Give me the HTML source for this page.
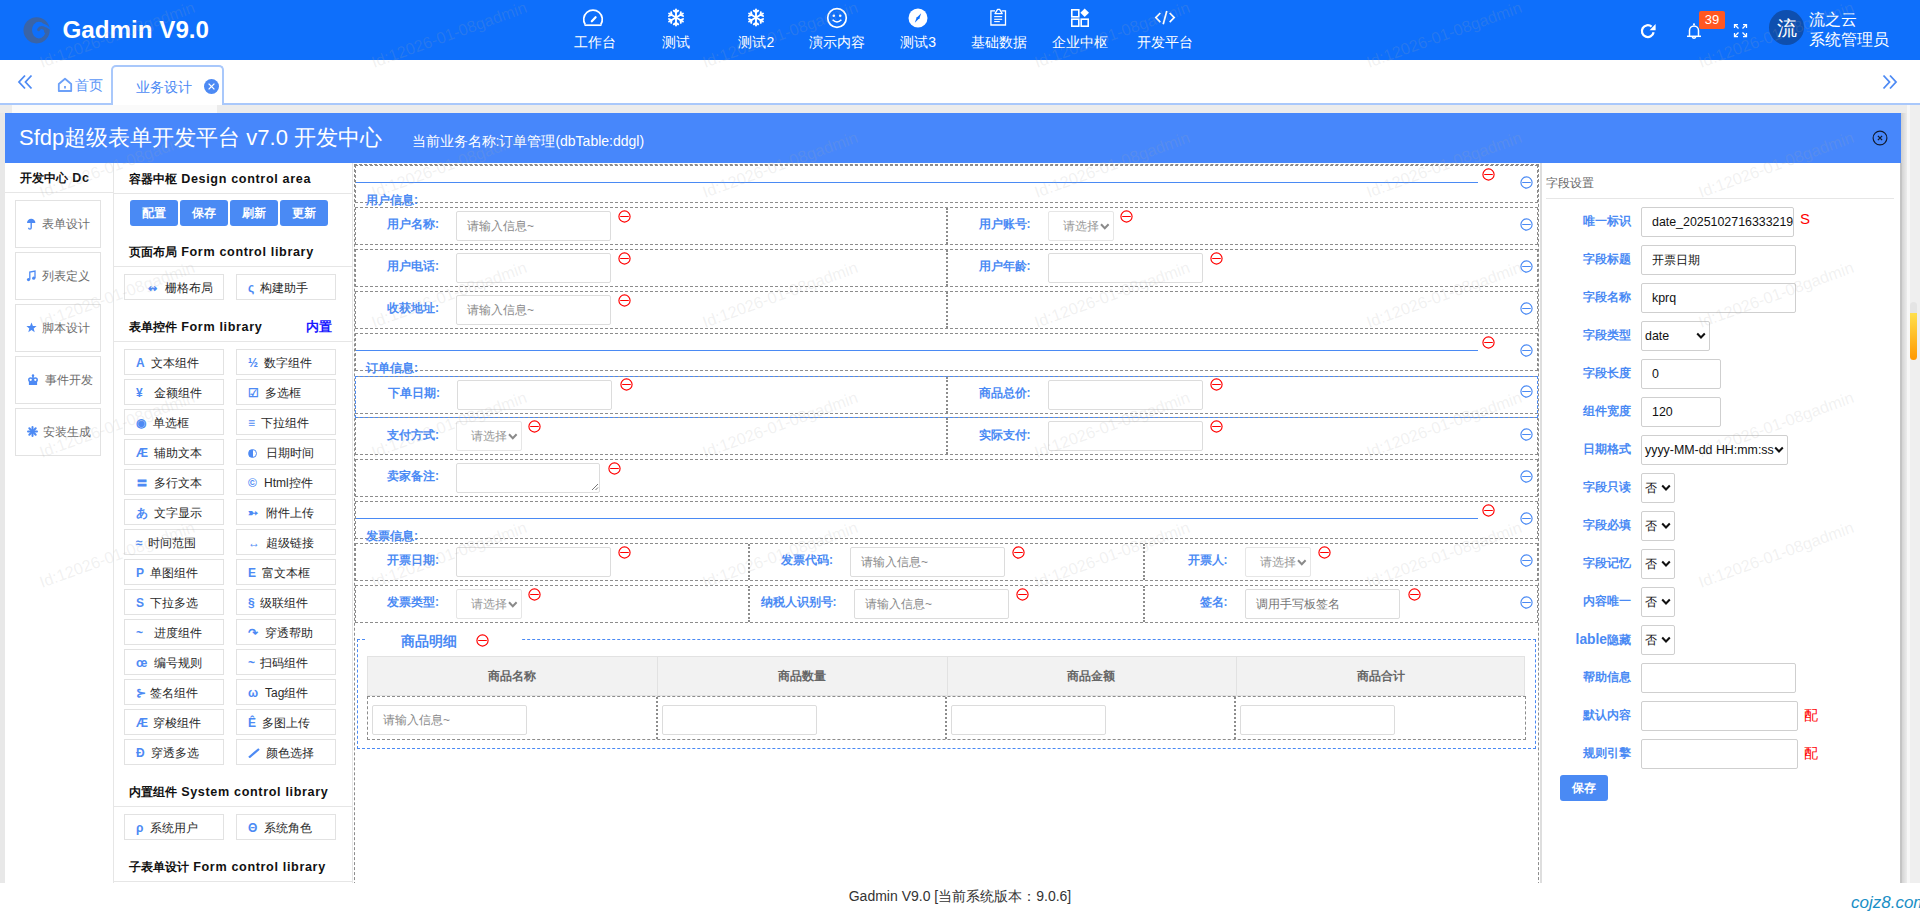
<!DOCTYPE html>
<html><head><meta charset="utf-8"><title>Sfdp</title>
<style>
html,body{margin:0;padding:0;}
body{width:1920px;height:911px;overflow:hidden;position:relative;background:#fff;font-family:"Liberation Sans",sans-serif;-webkit-font-smoothing:antialiased;}
div,svg{box-sizing:content-box;}
</style></head><body>
<div style="position:absolute;left:0px;top:0px;width:1920px;height:60px;background:#0e6ffb"></div><svg style="position:absolute;left:18px;top:12px" width="38" height="36" viewBox="18 12 38 36"><circle cx="36.6" cy="30.3" r="13.1" fill="#3a64a6"/><ellipse cx="38.9" cy="30.1" rx="6.9" ry="8.3" fill="#0e6ffb"/><path d="M43.2 23.6 Q47.5 24.8 50.5 28.2 L49.8 29.5 Q46.5 27 43 26.5 Z" fill="#0e6ffb"/><path d="M45.6 31.5 A3.7 3.7 0 0 0 38.6 29.6" fill="none" stroke="#3a64a6" stroke-width="3" stroke-linecap="round"/></svg><div style="position:absolute;left:62.5px;top:13.0px;line-height:34px;font-size:24.2px;color:#fff;font-weight:bold;white-space:nowrap;">Gadmin V9.0</div><div style="position:absolute;left:294.5px;width:600px;text-align:center;top:32.0px;line-height:20px;font-size:14px;color:#fff;font-weight:normal;white-space:nowrap;">工作台</div><svg style="position:absolute;left:582.0px;top:7px" width="22" height="20" viewBox="0 0 22 20"><path d="M3.2 17.5 A9.3 9.3 0 1 1 18.8 17.5" fill="none" stroke="#fff" stroke-width="1.7"/><line x1="2.5" y1="18.2" x2="19.5" y2="18.2" stroke="#fff" stroke-width="1.7"/><line x1="9.8" y1="14.3" x2="13.6" y2="10.2" stroke="#fff" stroke-width="2.2" stroke-linecap="round"/></svg><div style="position:absolute;left:375.5px;width:600px;text-align:center;top:32.0px;line-height:20px;font-size:14px;color:#fff;font-weight:normal;white-space:nowrap;">测试</div><svg style="position:absolute;left:664.5px;top:0px" width="22" height="28" viewBox="0 0 22 28"><g stroke="#fff" stroke-width="1.9" stroke-linecap="round" fill="none"><line x1="11" y1="17.5" x2="11.00" y2="9.50"/><line x1="11.00" y1="12.20" x2="8.79" y2="10.65"/><line x1="11.00" y1="12.20" x2="13.21" y2="10.65"/><line x1="11" y1="17.5" x2="17.93" y2="13.50"/><line x1="15.59" y1="14.85" x2="15.83" y2="12.16"/><line x1="15.59" y1="14.85" x2="18.04" y2="15.99"/><line x1="11" y1="17.5" x2="17.93" y2="21.50"/><line x1="15.59" y1="20.15" x2="18.04" y2="19.01"/><line x1="15.59" y1="20.15" x2="15.83" y2="22.84"/><line x1="11" y1="17.5" x2="11.00" y2="25.50"/><line x1="11.00" y1="22.80" x2="13.21" y2="24.35"/><line x1="11.00" y1="22.80" x2="8.79" y2="24.35"/><line x1="11" y1="17.5" x2="4.07" y2="21.50"/><line x1="6.41" y1="20.15" x2="6.17" y2="22.84"/><line x1="6.41" y1="20.15" x2="3.96" y2="19.01"/><line x1="11" y1="17.5" x2="4.07" y2="13.50"/><line x1="6.41" y1="14.85" x2="3.96" y2="15.99"/><line x1="6.41" y1="14.85" x2="6.17" y2="12.16"/></g></svg><div style="position:absolute;left:456.29999999999995px;width:600px;text-align:center;top:32.0px;line-height:20px;font-size:14px;color:#fff;font-weight:normal;white-space:nowrap;">测试2</div><svg style="position:absolute;left:745.3px;top:0px" width="22" height="28" viewBox="0 0 22 28"><g stroke="#fff" stroke-width="1.9" stroke-linecap="round" fill="none"><line x1="11" y1="17.5" x2="11.00" y2="9.50"/><line x1="11.00" y1="12.20" x2="8.79" y2="10.65"/><line x1="11.00" y1="12.20" x2="13.21" y2="10.65"/><line x1="11" y1="17.5" x2="17.93" y2="13.50"/><line x1="15.59" y1="14.85" x2="15.83" y2="12.16"/><line x1="15.59" y1="14.85" x2="18.04" y2="15.99"/><line x1="11" y1="17.5" x2="17.93" y2="21.50"/><line x1="15.59" y1="20.15" x2="18.04" y2="19.01"/><line x1="15.59" y1="20.15" x2="15.83" y2="22.84"/><line x1="11" y1="17.5" x2="11.00" y2="25.50"/><line x1="11.00" y1="22.80" x2="13.21" y2="24.35"/><line x1="11.00" y1="22.80" x2="8.79" y2="24.35"/><line x1="11" y1="17.5" x2="4.07" y2="21.50"/><line x1="6.41" y1="20.15" x2="6.17" y2="22.84"/><line x1="6.41" y1="20.15" x2="3.96" y2="19.01"/><line x1="11" y1="17.5" x2="4.07" y2="13.50"/><line x1="6.41" y1="14.85" x2="3.96" y2="15.99"/><line x1="6.41" y1="14.85" x2="6.17" y2="12.16"/></g></svg><div style="position:absolute;left:537px;width:600px;text-align:center;top:32.0px;line-height:20px;font-size:14px;color:#fff;font-weight:normal;white-space:nowrap;">演示内容</div><svg style="position:absolute;left:826px;top:7px" width="22" height="22" viewBox="0 0 22 22"><circle cx="11" cy="11" r="9.3" fill="none" stroke="#fff" stroke-width="1.7"/><circle cx="7.8" cy="8.8" r="1.3" fill="#fff"/><circle cx="14.2" cy="8.8" r="1.3" fill="#fff"/><path d="M6.6 12.8 Q11 17.2 15.4 12.8" fill="none" stroke="#fff" stroke-width="1.6"/></svg><div style="position:absolute;left:618.2px;width:600px;text-align:center;top:32.0px;line-height:20px;font-size:14px;color:#fff;font-weight:normal;white-space:nowrap;">测试3</div><svg style="position:absolute;left:907.2px;top:7px" width="22" height="22" viewBox="0 0 22 22"><circle cx="11" cy="11" r="9.5" fill="#fff"/><path d="M14.2 6.2 L12.2 12 L9.4 11 Z" fill="#0e6ffb"/><path d="M7.8 15.8 L9.8 10 L12.6 11 Z" fill="#0e6ffb"/></svg><div style="position:absolute;left:699.2px;width:600px;text-align:center;top:32.0px;line-height:20px;font-size:14px;color:#fff;font-weight:normal;white-space:nowrap;">基础数据</div><svg style="position:absolute;left:988.2px;top:7px" width="22" height="22" viewBox="0 0 22 22"><path d="M7 3.8 H2.9 V18 H17.5 V3.8 H13.5" fill="none" stroke="#fff" stroke-width="1.3"/><path d="M7 6.6 L9.6 2.4 H11.6 L14.2 6.6 Z" fill="none" stroke="#fff" stroke-width="1.3" stroke-linejoin="round"/><line x1="6.2" y1="9.6" x2="14.2" y2="9.6" stroke="#fff" stroke-width="1.1"/><line x1="6.2" y1="12.3" x2="14.2" y2="12.3" stroke="#fff" stroke-width="1.1"/><line x1="6.2" y1="14.6" x2="11.8" y2="14.6" stroke="#fff" stroke-width="1.1"/></svg><div style="position:absolute;left:780.2px;width:600px;text-align:center;top:32.0px;line-height:20px;font-size:14px;color:#fff;font-weight:normal;white-space:nowrap;">企业中枢</div><svg style="position:absolute;left:1069.2px;top:7px" width="22" height="22" viewBox="0 0 22 22"><rect x="2.8" y="2.8" width="7" height="7" fill="none" stroke="#fff" stroke-width="1.6"/><rect x="2.8" y="12.2" width="7" height="7" fill="none" stroke="#fff" stroke-width="1.6"/><rect x="12.2" y="12.2" width="7" height="7" fill="none" stroke="#fff" stroke-width="1.6"/><path d="M15.7 1.5 L20 5.8 L15.7 10.1 L11.4 5.8 Z" fill="#fff"/></svg><div style="position:absolute;left:864.8px;width:600px;text-align:center;top:32.0px;line-height:20px;font-size:14px;color:#fff;font-weight:normal;white-space:nowrap;">开发平台</div><svg style="position:absolute;left:1153.8px;top:7px" width="22" height="22" viewBox="0 0 22 22"><path d="M6.3 6 L1.8 10.6 L6.3 15.2" fill="none" stroke="#fff" stroke-width="1.7"/><path d="M15.7 6 L20.2 10.6 L15.7 15.2" fill="none" stroke="#fff" stroke-width="1.7"/><line x1="12.8" y1="4" x2="9.2" y2="17.2" stroke="#fff" stroke-width="1.7"/></svg><svg style="position:absolute;left:1640px;top:23px" width="17" height="16" viewBox="0 0 17 16"><path d="M13.6 9.2 A5.9 5.9 0 1 1 11.6 3.6" fill="none" stroke="#fff" stroke-width="2.3"/><path d="M9.6 7.2 L15.6 7.2 L15.6 1 Z" fill="#fff"/></svg><svg style="position:absolute;left:1686px;top:22px" width="16" height="18" viewBox="0 0 16 18"><path d="M3.5 14 V8.5 A4.5 4.5 0 0 1 12.5 8.5 V14" fill="none" stroke="#fff" stroke-width="1.5"/><line x1="1" y1="14.3" x2="15" y2="14.3" stroke="#fff" stroke-width="1.5"/><path d="M6.3 15 A1.8 1.8 0 0 0 9.7 15" fill="none" stroke="#fff" stroke-width="1.5"/><circle cx="8" cy="2.3" r="1" fill="#fff"/></svg><div style="position:absolute;left:1699px;top:11px;width:26px;height:18px;background:#ff5722;border-radius:2px"></div><div style="position:absolute;left:1412px;width:600px;text-align:center;top:10.8px;line-height:18px;font-size:13px;color:#fff;font-weight:normal;white-space:nowrap;">39</div><svg style="position:absolute;left:1733px;top:23px" width="15" height="15" viewBox="0 0 15 15"><g stroke="#fff" stroke-width="1.25" fill="none"><path d="M1.5 5 V1.5 H5"/><line x1="1.5" y1="1.5" x2="5.5" y2="5.5"/><path d="M10 1.5 H13.5 V5"/><line x1="13.5" y1="1.5" x2="9.5" y2="5.5"/><path d="M1.5 10 V13.5 H5"/><line x1="1.5" y1="13.5" x2="5.5" y2="9.5"/><path d="M10 13.5 H13.5 V10"/><line x1="13.5" y1="13.5" x2="9.5" y2="9.5"/></g></svg><div style="position:absolute;left:1769px;top:10px;width:35px;height:35px;background:#0e4faf;border-radius:50%"></div><div style="position:absolute;left:1486.5px;width:600px;text-align:center;top:13.5px;line-height:28px;font-size:20px;color:#fff;font-weight:normal;white-space:nowrap;">流</div><div style="position:absolute;left:1809px;top:8.5px;line-height:22px;font-size:16px;color:#fff;font-weight:normal;white-space:nowrap;">流之云</div><div style="position:absolute;left:1809px;top:28.5px;line-height:22px;font-size:16px;color:#fff;font-weight:normal;white-space:nowrap;">系统管理员</div><div style="position:absolute;left:0px;top:103px;width:1920px;height:2px;background:#a9c8fb"></div><svg style="position:absolute;left:17px;top:74px" width="17" height="16" viewBox="0 0 17 16"><path d="M8 1.5 L2 8 L8 14.5 M14.5 1.5 L8.5 8 L14.5 14.5" fill="none" stroke="#4d8af4" stroke-width="1.8"/></svg><svg style="position:absolute;left:57px;top:77px" width="16" height="16" viewBox="0 0 16 16"><path d="M1.8 7 L8 1.8 L14.2 7 V14 H1.8 Z" fill="none" stroke="#6ca0f8" stroke-width="1.8" stroke-linejoin="round"/><line x1="8" y1="9" x2="8" y2="11.5" stroke="#6ca0f8" stroke-width="1.8"/></svg><div style="position:absolute;left:75px;top:75.0px;line-height:20px;font-size:14px;color:#5a96f7;font-weight:normal;white-space:nowrap;">首页</div><div style="position:absolute;left:111px;top:65px;width:109px;height:40px;border:2px solid #a9c8fb;border-bottom:none;border-radius:5px 5px 0 0;background:#fff"></div><div style="position:absolute;left:136px;top:77.0px;line-height:20px;font-size:14px;color:#4d8af4;font-weight:normal;white-space:nowrap;">业务设计</div><svg style="position:absolute;left:204px;top:79px" width="15" height="15" viewBox="0 0 15 15"><circle cx="7.5" cy="7.5" r="7.5" fill="#4d8af4"/><path d="M4.6 4.6 L10.4 10.4 M10.4 4.6 L4.6 10.4" stroke="#fff" stroke-width="1.3"/></svg><svg style="position:absolute;left:1881px;top:74px" width="17" height="16" viewBox="0 0 17 16"><path d="M2.5 1.5 L8.5 8 L2.5 14.5 M9 1.5 L15 8 L9 14.5" fill="none" stroke="#4d8af4" stroke-width="1.8"/></svg><div style="position:absolute;left:0px;top:105px;width:1920px;height:8px;background:#ececec"></div><div style="position:absolute;left:12px;top:105px;width:205px;height:8px;background:#fafafa"></div><div style="position:absolute;left:0px;top:113px;width:5px;height:770px;background:#e8e8e8"></div><div style="position:absolute;left:5px;top:113px;width:1896px;height:50px;background:#4787fb"></div><div style="position:absolute;left:19px;top:122.0px;line-height:31px;font-size:22px;color:#fff;font-weight:normal;white-space:nowrap;">Sfdp超级表单开发平台 v7.0 开发中心</div><div style="position:absolute;left:411.5px;top:130.5px;line-height:20px;font-size:14px;color:#fff;font-weight:normal;white-space:nowrap;">当前业务名称:订单管理(dbTable:ddgl)</div><svg style="position:absolute;left:1871.5px;top:130px" width="16" height="16" viewBox="0 0 16 16"><circle cx="8" cy="8" r="6.9" fill="none" stroke="#111a2e" stroke-width="1.15"/><path d="M5.9 5.9 L10.1 10.1 M10.1 5.9 L5.9 10.1" stroke="#111a2e" stroke-width="1.3"/></svg><div style="position:absolute;left:1901px;top:113px;width:6px;height:770px;background:linear-gradient(90deg,#cfcfcf,#ececec)"></div><div style="position:absolute;left:1907px;top:105px;width:3px;height:778px;background:#f7f7f7"></div><div style="position:absolute;left:1910px;top:105px;width:10px;height:778px;background:#efefef"></div><div style="position:absolute;left:1910px;top:302px;width:7px;height:16px;background:#e4e4e4;border-radius:3.5px 3.5px 0 0"></div><div style="position:absolute;left:1910px;top:313px;width:7px;height:47px;background:linear-gradient(#ffe04d,#ff9800);border-radius:0 0 3.5px 3.5px"></div><div style="position:absolute;left:1900px;top:163px;width:2px;height:720px;background:#c4c4c4"></div><div style="position:absolute;left:5px;top:163px;width:108px;height:720px;background:#fff"></div><div style="position:absolute;left:20px;top:169.0px;line-height:18px;font-size:13px;color:#111;font-weight:bold;white-space:nowrap;"><span style="font-size:12px">开发中心</span><span style="font-size:12.6px;letter-spacing:0.65px"> Dc</span></div><div style="position:absolute;left:5px;top:192px;width:108px;height:1px;background:#e6e6e6"></div><div style="position:absolute;left:113px;top:163px;width:1px;height:720px;background:#e6e6e6"></div><div style="position:absolute;left:15px;top:200px;width:84px;height:46px;border:1px solid #e2e2e2"></div><div style="position:absolute;left:42px;top:215.5px;line-height:17px;font-size:12px;color:#6c6c6c;font-weight:normal;white-space:nowrap;">表单设计</div><svg style="position:absolute;left:26px;top:218px" width="10" height="12" viewBox="0 0 10 12"><path d="M1 5 A4.2 4.2 0 0 1 9.4 5 Z" fill="#4d8af4"/><path d="M5.2 4.5 V9.8 A1.3 1.3 0 0 1 2.6 9.8" fill="none" stroke="#4d8af4" stroke-width="1.4"/></svg><div style="position:absolute;left:15px;top:252px;width:84px;height:46px;border:1px solid #e2e2e2"></div><div style="position:absolute;left:42px;top:267.5px;line-height:17px;font-size:12px;color:#6c6c6c;font-weight:normal;white-space:nowrap;">列表定义</div><svg style="position:absolute;left:26px;top:270px" width="10" height="12" viewBox="0 0 10 12"><path d="M3.8 9.5 V2 L9 1 V8" fill="none" stroke="#4d8af4" stroke-width="1.3"/><circle cx="2.5" cy="9.6" r="1.6" fill="#4d8af4"/><circle cx="7.7" cy="8.2" r="1.6" fill="#4d8af4"/></svg><div style="position:absolute;left:15px;top:304px;width:84px;height:46px;border:1px solid #e2e2e2"></div><div style="position:absolute;left:42px;top:319.5px;line-height:17px;font-size:12px;color:#6c6c6c;font-weight:normal;white-space:nowrap;">脚本设计</div><svg style="position:absolute;left:26px;top:322px" width="11" height="11" viewBox="0 0 11 11"><path d="M5.5 0.5 L6.9 4 L10.6 4.1 L7.7 6.5 L8.7 10.2 L5.5 8.1 L2.3 10.2 L3.3 6.5 L0.4 4.1 L4.1 4 Z" fill="#4d8af4"/></svg><div style="position:absolute;left:15px;top:356px;width:84px;height:46px;border:1px solid #e2e2e2"></div><div style="position:absolute;left:45px;top:371.5px;line-height:17px;font-size:12px;color:#6c6c6c;font-weight:normal;white-space:nowrap;">事件开发</div><svg style="position:absolute;left:28px;top:374px" width="10" height="12" viewBox="0 0 10 12"><circle cx="2.7" cy="5.8" r="1.9" fill="none" stroke="#4d8af4" stroke-width="1.5"/><circle cx="7.3" cy="5.8" r="1.9" fill="none" stroke="#4d8af4" stroke-width="1.5"/><rect x="4.2" y="1.8" width="1.6" height="6" fill="#4d8af4"/><circle cx="5" cy="1.5" r="1.2" fill="#4d8af4"/><rect x="0.9" y="7.4" width="8.2" height="3.6" fill="#4d8af4"/></svg><div style="position:absolute;left:15px;top:408px;width:84px;height:46px;border:1px solid #e2e2e2"></div><div style="position:absolute;left:43px;top:423.5px;line-height:17px;font-size:12px;color:#6c6c6c;font-weight:normal;white-space:nowrap;">安装生成</div><svg style="position:absolute;left:26.5px;top:426px" width="11" height="11" viewBox="0 0 11 11"><g stroke="#4d8af4" stroke-width="2" stroke-linecap="round"><line x1="5.5" y1="1" x2="5.5" y2="10"/><line x1="1" y1="5.5" x2="10" y2="5.5"/><line x1="2.3" y1="2.3" x2="8.7" y2="8.7"/><line x1="2.3" y1="8.7" x2="8.7" y2="2.3"/></g></svg><div style="position:absolute;left:352px;top:163px;width:1px;height:720px;background:#e6e6e6"></div><div style="position:absolute;left:129px;top:170.0px;line-height:18px;font-size:13px;color:#111;font-weight:bold;white-space:nowrap;"><span style="font-size:12px">容器中枢</span><span style="font-size:12.6px;letter-spacing:0.65px"> Design control area</span></div><div style="position:absolute;left:114px;top:193px;width:238px;height:1px;background:#e6e6e6"></div><div style="position:absolute;left:130px;top:200px;width:48px;height:26px;background:#4a8af4;border-radius:3px"></div><div style="position:absolute;left:-146px;width:600px;text-align:center;top:204.5px;line-height:17px;font-size:12px;color:#fff;font-weight:bold;white-space:nowrap;">配置</div><div style="position:absolute;left:180px;top:200px;width:48px;height:26px;background:#4a8af4;border-radius:3px"></div><div style="position:absolute;left:-96px;width:600px;text-align:center;top:204.5px;line-height:17px;font-size:12px;color:#fff;font-weight:bold;white-space:nowrap;">保存</div><div style="position:absolute;left:230px;top:200px;width:48px;height:26px;background:#4a8af4;border-radius:3px"></div><div style="position:absolute;left:-46px;width:600px;text-align:center;top:204.5px;line-height:17px;font-size:12px;color:#fff;font-weight:bold;white-space:nowrap;">刷新</div><div style="position:absolute;left:280px;top:200px;width:48px;height:26px;background:#4a8af4;border-radius:3px"></div><div style="position:absolute;left:4px;width:600px;text-align:center;top:204.5px;line-height:17px;font-size:12px;color:#fff;font-weight:bold;white-space:nowrap;">更新</div><div style="position:absolute;left:129px;top:242.5px;line-height:18px;font-size:13px;color:#111;font-weight:bold;white-space:nowrap;"><span style="font-size:12px">页面布局</span><span style="font-size:12.6px;letter-spacing:0.65px"> Form control library</span></div><div style="position:absolute;left:114px;top:266px;width:238px;height:1px;background:#e6e6e6"></div><div style="position:absolute;left:124px;top:274px;width:98px;height:24px;border:1px solid #e2e2e2"></div><div style="position:absolute;left:148px;top:275px;height:26px;line-height:26px;font-size:12px;color:#4d8af4;font-weight:bold;white-space:nowrap;"><span style="font-size:11px">↭</span></div><div style="position:absolute;left:165px;top:279.5px;line-height:17px;font-size:12px;color:#2a2a2a;font-weight:normal;white-space:nowrap;">栅格布局</div><div style="position:absolute;left:236px;top:274px;width:98px;height:24px;border:1px solid #e2e2e2"></div><div style="position:absolute;left:248px;top:275px;height:26px;line-height:26px;font-size:12px;color:#4d8af4;font-weight:bold;white-space:nowrap;">ς</div><div style="position:absolute;left:260px;top:279.5px;line-height:17px;font-size:12px;color:#2a2a2a;font-weight:normal;white-space:nowrap;">构建助手</div><div style="position:absolute;left:129px;top:318.0px;line-height:18px;font-size:13px;color:#111;font-weight:bold;white-space:nowrap;"><span style="font-size:12px">表单控件</span><span style="font-size:12.6px;letter-spacing:0.65px"> Form library</span></div><div style="position:absolute;left:-268px;width:600px;text-align:right;top:318.0px;line-height:18px;font-size:13px;color:#1a1aff;font-weight:bold;white-space:nowrap;">内置</div><div style="position:absolute;left:114px;top:341px;width:238px;height:1px;background:#e6e6e6"></div><div style="position:absolute;left:124px;top:349px;width:98px;height:24px;border:1px solid #e2e2e2"></div><div style="position:absolute;left:136px;top:350px;height:26px;line-height:26px;font-size:12px;color:#4d8af4;font-weight:bold;white-space:nowrap;">A</div><div style="position:absolute;left:151px;top:354.5px;line-height:17px;font-size:12px;color:#2a2a2a;font-weight:normal;white-space:nowrap;">文本组件</div><div style="position:absolute;left:236px;top:349px;width:98px;height:24px;border:1px solid #e2e2e2"></div><div style="position:absolute;left:248px;top:350px;height:26px;line-height:26px;font-size:12px;color:#4d8af4;font-weight:bold;white-space:nowrap;">½</div><div style="position:absolute;left:264px;top:354.5px;line-height:17px;font-size:12px;color:#2a2a2a;font-weight:normal;white-space:nowrap;">数字组件</div><div style="position:absolute;left:124px;top:379px;width:98px;height:24px;border:1px solid #e2e2e2"></div><div style="position:absolute;left:136px;top:380px;height:26px;line-height:26px;font-size:12px;color:#4d8af4;font-weight:bold;white-space:nowrap;">¥</div><div style="position:absolute;left:154px;top:384.5px;line-height:17px;font-size:12px;color:#2a2a2a;font-weight:normal;white-space:nowrap;">金额组件</div><div style="position:absolute;left:236px;top:379px;width:98px;height:24px;border:1px solid #e2e2e2"></div><div style="position:absolute;left:248px;top:380px;height:26px;line-height:26px;font-size:12px;color:#4d8af4;font-weight:bold;white-space:nowrap;">☑</div><div style="position:absolute;left:264.6px;top:384.5px;line-height:17px;font-size:12px;color:#2a2a2a;font-weight:normal;white-space:nowrap;">多选框</div><div style="position:absolute;left:124px;top:409px;width:98px;height:24px;border:1px solid #e2e2e2"></div><div style="position:absolute;left:136px;top:410px;height:26px;line-height:26px;font-size:12px;color:#4d8af4;font-weight:bold;white-space:nowrap;">◉</div><div style="position:absolute;left:153px;top:414.5px;line-height:17px;font-size:12px;color:#2a2a2a;font-weight:normal;white-space:nowrap;">单选框</div><div style="position:absolute;left:236px;top:409px;width:98px;height:24px;border:1px solid #e2e2e2"></div><div style="position:absolute;left:248px;top:410px;height:26px;line-height:26px;font-size:12px;color:#4d8af4;font-weight:bold;white-space:nowrap;">≡</div><div style="position:absolute;left:261.4px;top:414.5px;line-height:17px;font-size:12px;color:#2a2a2a;font-weight:normal;white-space:nowrap;">下拉组件</div><div style="position:absolute;left:124px;top:439px;width:98px;height:24px;border:1px solid #e2e2e2"></div><div style="position:absolute;left:136px;top:440px;height:26px;line-height:26px;font-size:12px;color:#4d8af4;font-weight:bold;white-space:nowrap;">Æ</div><div style="position:absolute;left:154px;top:444.5px;line-height:17px;font-size:12px;color:#2a2a2a;font-weight:normal;white-space:nowrap;">辅助文本</div><div style="position:absolute;left:236px;top:439px;width:98px;height:24px;border:1px solid #e2e2e2"></div><div style="position:absolute;left:248px;top:440px;height:26px;line-height:26px;font-size:12px;color:#4d8af4;font-weight:bold;white-space:nowrap;"><span style="display:inline-block;width:9px;height:9px;border-radius:50%;border:1.5px solid #4d8af4;background:linear-gradient(90deg,#4d8af4 50%,#fff 50%);box-sizing:border-box;vertical-align:-1px"></span></div><div style="position:absolute;left:265.5px;top:444.5px;line-height:17px;font-size:12px;color:#2a2a2a;font-weight:normal;white-space:nowrap;">日期时间</div><div style="position:absolute;left:124px;top:469px;width:98px;height:24px;border:1px solid #e2e2e2"></div><div style="position:absolute;left:136px;top:470px;height:26px;line-height:26px;font-size:12px;color:#4d8af4;font-weight:bold;white-space:nowrap;">〓</div><div style="position:absolute;left:154px;top:474.5px;line-height:17px;font-size:12px;color:#2a2a2a;font-weight:normal;white-space:nowrap;">多行文本</div><div style="position:absolute;left:236px;top:469px;width:98px;height:24px;border:1px solid #e2e2e2"></div><div style="position:absolute;left:248px;top:470px;height:26px;line-height:26px;font-size:12px;color:#4d8af4;font-weight:bold;white-space:nowrap;">©</div><div style="position:absolute;left:264px;top:474.5px;line-height:17px;font-size:12px;color:#2a2a2a;font-weight:normal;white-space:nowrap;">Html控件</div><div style="position:absolute;left:124px;top:499px;width:98px;height:24px;border:1px solid #e2e2e2"></div><div style="position:absolute;left:136px;top:500px;height:26px;line-height:26px;font-size:12px;color:#4d8af4;font-weight:bold;white-space:nowrap;">あ</div><div style="position:absolute;left:154px;top:504.5px;line-height:17px;font-size:12px;color:#2a2a2a;font-weight:normal;white-space:nowrap;">文字显示</div><div style="position:absolute;left:236px;top:499px;width:98px;height:24px;border:1px solid #e2e2e2"></div><div style="position:absolute;left:248px;top:500px;height:26px;line-height:26px;font-size:12px;color:#4d8af4;font-weight:bold;white-space:nowrap;">➳</div><div style="position:absolute;left:266px;top:504.5px;line-height:17px;font-size:12px;color:#2a2a2a;font-weight:normal;white-space:nowrap;">附件上传</div><div style="position:absolute;left:124px;top:529px;width:98px;height:24px;border:1px solid #e2e2e2"></div><div style="position:absolute;left:136px;top:530px;height:26px;line-height:26px;font-size:12px;color:#4d8af4;font-weight:bold;white-space:nowrap;">≈</div><div style="position:absolute;left:148px;top:534.5px;line-height:17px;font-size:12px;color:#2a2a2a;font-weight:normal;white-space:nowrap;">时间范围</div><div style="position:absolute;left:236px;top:529px;width:98px;height:24px;border:1px solid #e2e2e2"></div><div style="position:absolute;left:248px;top:530px;height:26px;line-height:26px;font-size:12px;color:#4d8af4;font-weight:bold;white-space:nowrap;">↔</div><div style="position:absolute;left:266px;top:534.5px;line-height:17px;font-size:12px;color:#2a2a2a;font-weight:normal;white-space:nowrap;">超级链接</div><div style="position:absolute;left:124px;top:559px;width:98px;height:24px;border:1px solid #e2e2e2"></div><div style="position:absolute;left:136px;top:560px;height:26px;line-height:26px;font-size:12px;color:#4d8af4;font-weight:bold;white-space:nowrap;">P</div><div style="position:absolute;left:150px;top:564.5px;line-height:17px;font-size:12px;color:#2a2a2a;font-weight:normal;white-space:nowrap;">单图组件</div><div style="position:absolute;left:236px;top:559px;width:98px;height:24px;border:1px solid #e2e2e2"></div><div style="position:absolute;left:248px;top:560px;height:26px;line-height:26px;font-size:12px;color:#4d8af4;font-weight:bold;white-space:nowrap;">E</div><div style="position:absolute;left:262px;top:564.5px;line-height:17px;font-size:12px;color:#2a2a2a;font-weight:normal;white-space:nowrap;">富文本框</div><div style="position:absolute;left:124px;top:589px;width:98px;height:24px;border:1px solid #e2e2e2"></div><div style="position:absolute;left:136px;top:590px;height:26px;line-height:26px;font-size:12px;color:#4d8af4;font-weight:bold;white-space:nowrap;">S</div><div style="position:absolute;left:150px;top:594.5px;line-height:17px;font-size:12px;color:#2a2a2a;font-weight:normal;white-space:nowrap;">下拉多选</div><div style="position:absolute;left:236px;top:589px;width:98px;height:24px;border:1px solid #e2e2e2"></div><div style="position:absolute;left:248px;top:590px;height:26px;line-height:26px;font-size:12px;color:#4d8af4;font-weight:bold;white-space:nowrap;">§</div><div style="position:absolute;left:260.3px;top:594.5px;line-height:17px;font-size:12px;color:#2a2a2a;font-weight:normal;white-space:nowrap;">级联组件</div><div style="position:absolute;left:124px;top:619px;width:98px;height:24px;border:1px solid #e2e2e2"></div><div style="position:absolute;left:136px;top:620px;height:26px;line-height:26px;font-size:12px;color:#4d8af4;font-weight:bold;white-space:nowrap;">~</div><div style="position:absolute;left:154px;top:624.5px;line-height:17px;font-size:12px;color:#2a2a2a;font-weight:normal;white-space:nowrap;">进度组件</div><div style="position:absolute;left:236px;top:619px;width:98px;height:24px;border:1px solid #e2e2e2"></div><div style="position:absolute;left:248px;top:620px;height:26px;line-height:26px;font-size:12px;color:#4d8af4;font-weight:bold;white-space:nowrap;">↷</div><div style="position:absolute;left:264.6px;top:624.5px;line-height:17px;font-size:12px;color:#2a2a2a;font-weight:normal;white-space:nowrap;">穿透帮助</div><div style="position:absolute;left:124px;top:649px;width:98px;height:24px;border:1px solid #e2e2e2"></div><div style="position:absolute;left:136px;top:650px;height:26px;line-height:26px;font-size:12px;color:#4d8af4;font-weight:bold;white-space:nowrap;">œ</div><div style="position:absolute;left:153.6px;top:654.5px;line-height:17px;font-size:12px;color:#2a2a2a;font-weight:normal;white-space:nowrap;">编号规则</div><div style="position:absolute;left:236px;top:649px;width:98px;height:24px;border:1px solid #e2e2e2"></div><div style="position:absolute;left:248px;top:650px;height:26px;line-height:26px;font-size:12px;color:#4d8af4;font-weight:bold;white-space:nowrap;">~</div><div style="position:absolute;left:260.3px;top:654.5px;line-height:17px;font-size:12px;color:#2a2a2a;font-weight:normal;white-space:nowrap;">扫码组件</div><div style="position:absolute;left:124px;top:679px;width:98px;height:24px;border:1px solid #e2e2e2"></div><div style="position:absolute;left:136px;top:680px;height:26px;line-height:26px;font-size:12px;color:#4d8af4;font-weight:bold;white-space:nowrap;">⊱</div><div style="position:absolute;left:150px;top:684.5px;line-height:17px;font-size:12px;color:#2a2a2a;font-weight:normal;white-space:nowrap;">签名组件</div><div style="position:absolute;left:236px;top:679px;width:98px;height:24px;border:1px solid #e2e2e2"></div><div style="position:absolute;left:248px;top:680px;height:26px;line-height:26px;font-size:12px;color:#4d8af4;font-weight:bold;white-space:nowrap;">ω</div><div style="position:absolute;left:265px;top:684.5px;line-height:17px;font-size:12px;color:#2a2a2a;font-weight:normal;white-space:nowrap;">Tag组件</div><div style="position:absolute;left:124px;top:709px;width:98px;height:24px;border:1px solid #e2e2e2"></div><div style="position:absolute;left:136px;top:710px;height:26px;line-height:26px;font-size:12px;color:#4d8af4;font-weight:bold;white-space:nowrap;">Æ</div><div style="position:absolute;left:153.4px;top:714.5px;line-height:17px;font-size:12px;color:#2a2a2a;font-weight:normal;white-space:nowrap;">穿梭组件</div><div style="position:absolute;left:236px;top:709px;width:98px;height:24px;border:1px solid #e2e2e2"></div><div style="position:absolute;left:248px;top:710px;height:26px;line-height:26px;font-size:12px;color:#4d8af4;font-weight:bold;white-space:nowrap;">Ê</div><div style="position:absolute;left:262px;top:714.5px;line-height:17px;font-size:12px;color:#2a2a2a;font-weight:normal;white-space:nowrap;">多图上传</div><div style="position:absolute;left:124px;top:739px;width:98px;height:24px;border:1px solid #e2e2e2"></div><div style="position:absolute;left:136px;top:740px;height:26px;line-height:26px;font-size:12px;color:#4d8af4;font-weight:bold;white-space:nowrap;">Đ</div><div style="position:absolute;left:151px;top:744.5px;line-height:17px;font-size:12px;color:#2a2a2a;font-weight:normal;white-space:nowrap;">穿透多选</div><div style="position:absolute;left:236px;top:739px;width:98px;height:24px;border:1px solid #e2e2e2"></div><div style="position:absolute;left:248px;top:740px;height:26px;line-height:26px;font-size:12px;color:#4d8af4;font-weight:bold;white-space:nowrap;"><svg width="12" height="10" style="vertical-align:-1px"><path d="M1 9.5 L11 1" stroke="#4d8af4" stroke-width="2.2"/></svg></div><div style="position:absolute;left:265.7px;top:744.5px;line-height:17px;font-size:12px;color:#2a2a2a;font-weight:normal;white-space:nowrap;">颜色选择</div><div style="position:absolute;left:129px;top:782.5px;line-height:18px;font-size:13px;color:#111;font-weight:bold;white-space:nowrap;"><span style="font-size:12px">内置组件</span><span style="font-size:12.6px;letter-spacing:0.65px"> System control library</span></div><div style="position:absolute;left:114px;top:806px;width:238px;height:1px;background:#e6e6e6"></div><div style="position:absolute;left:124px;top:814px;width:98px;height:24px;border:1px solid #e2e2e2"></div><div style="position:absolute;left:136px;top:815px;height:26px;line-height:26px;font-size:12px;color:#4d8af4;font-weight:bold;white-space:nowrap;">ρ</div><div style="position:absolute;left:149.6px;top:819.5px;line-height:17px;font-size:12px;color:#2a2a2a;font-weight:normal;white-space:nowrap;">系统用户</div><div style="position:absolute;left:236px;top:814px;width:98px;height:24px;border:1px solid #e2e2e2"></div><div style="position:absolute;left:248px;top:815px;height:26px;line-height:26px;font-size:12px;color:#4d8af4;font-weight:bold;white-space:nowrap;">Θ</div><div style="position:absolute;left:263.7px;top:819.5px;line-height:17px;font-size:12px;color:#2a2a2a;font-weight:normal;white-space:nowrap;">系统角色</div><div style="position:absolute;left:129px;top:857.5px;line-height:18px;font-size:13px;color:#111;font-weight:bold;white-space:nowrap;"><span style="font-size:12px">子表单设计</span><span style="font-size:12.6px;letter-spacing:0.65px"> Form control library</span></div><div style="position:absolute;left:114px;top:881px;width:238px;height:1px;background:#e6e6e6"></div><div style="position:absolute;left:354px;top:164px;width:1183px;height:740px;border-left:1px dashed #8c8c8c;border-top:1px dashed #8c8c8c;border-right:1px dashed #8c8c8c"></div><div style="position:absolute;left:355px;top:165px;width:1181px;height:36px;border:1px dashed #8c8c8c"></div><div style="position:absolute;left:356px;top:182px;width:1122px;height:1px;background:#4a8af4"></div><svg style="position:absolute;left:1482px;top:168px" width="13" height="13" viewBox="0 0 13 13"><circle cx="6.5" cy="6.5" r="5.6" fill="none" stroke="#f00" stroke-width="1.15"/><line x1="2.2" y1="6.5" x2="10.8" y2="6.5" stroke="#f00" stroke-width="1"/></svg><svg style="position:absolute;left:1520px;top:176px" width="13" height="13" viewBox="0 0 13 13"><circle cx="6.5" cy="6.5" r="5.6" fill="none" stroke="#4a8af4" stroke-width="1.15"/><line x1="2.2" y1="6.5" x2="10.8" y2="6.5" stroke="#4a8af4" stroke-width="1"/></svg><div style="position:absolute;left:366px;top:191.5px;line-height:17px;font-size:12px;color:#4a8af4;font-weight:bold;white-space:nowrap;">用户信息:</div><div style="position:absolute;left:355px;top:207px;width:1181px;height:36px;border:1px dashed #8c8c8c"></div><div style="position:absolute;left:946px;top:208px;width:0px;height:36px;border-left:2px dotted #8c8c8c"></div><div style="position:absolute;left:-161.0px;width:600px;text-align:right;top:216.0px;line-height:17px;font-size:12px;color:#4a8af4;font-weight:bold;white-space:nowrap;">用户名称:</div><div style="position:absolute;left:456px;top:211px;width:153px;height:28px;border:1px solid #dcdcdc;border-radius:2px;background:#fff"></div><div style="position:absolute;left:467px;top:217.5px;line-height:17px;font-size:12px;color:#8a8a8a;font-weight:normal;white-space:nowrap;">请输入信息~</div><svg style="position:absolute;left:618px;top:210px" width="13" height="13" viewBox="0 0 13 13"><circle cx="6.5" cy="6.5" r="5.6" fill="none" stroke="#f00" stroke-width="1.15"/><line x1="2.2" y1="6.5" x2="10.8" y2="6.5" stroke="#f00" stroke-width="1"/></svg><div style="position:absolute;left:430.5px;width:600px;text-align:right;top:216.0px;line-height:17px;font-size:12px;color:#4a8af4;font-weight:bold;white-space:nowrap;">用户账号:</div><div style="position:absolute;left:1048px;top:211px;width:64px;height:28px;border:1px solid #e6e6e6;border-radius:2px;background:#fff"></div><div style="position:absolute;left:1063px;top:217.5px;line-height:17px;font-size:12px;color:#999;font-weight:normal;white-space:nowrap;">请选择</div><svg style="position:absolute;left:1100px;top:223px" width="10" height="7" viewBox="0 0 10 7"><path d="M1 1.2 L4.8 5.2 L8.6 1.2" fill="none" stroke="#8a8a8a" stroke-width="2"/></svg><svg style="position:absolute;left:1120px;top:210px" width="13" height="13" viewBox="0 0 13 13"><circle cx="6.5" cy="6.5" r="5.6" fill="none" stroke="#f00" stroke-width="1.15"/><line x1="2.2" y1="6.5" x2="10.8" y2="6.5" stroke="#f00" stroke-width="1"/></svg><svg style="position:absolute;left:1520px;top:218px" width="13" height="13" viewBox="0 0 13 13"><circle cx="6.5" cy="6.5" r="5.6" fill="none" stroke="#4a8af4" stroke-width="1.15"/><line x1="2.2" y1="6.5" x2="10.8" y2="6.5" stroke="#4a8af4" stroke-width="1"/></svg><div style="position:absolute;left:355px;top:249px;width:1181px;height:36px;border:1px dashed #8c8c8c"></div><div style="position:absolute;left:946px;top:250px;width:0px;height:36px;border-left:2px dotted #8c8c8c"></div><div style="position:absolute;left:-161.0px;width:600px;text-align:right;top:258.0px;line-height:17px;font-size:12px;color:#4a8af4;font-weight:bold;white-space:nowrap;">用户电话:</div><div style="position:absolute;left:456px;top:253px;width:153px;height:28px;border:1px solid #dcdcdc;border-radius:2px;background:#fff"></div><svg style="position:absolute;left:618px;top:252px" width="13" height="13" viewBox="0 0 13 13"><circle cx="6.5" cy="6.5" r="5.6" fill="none" stroke="#f00" stroke-width="1.15"/><line x1="2.2" y1="6.5" x2="10.8" y2="6.5" stroke="#f00" stroke-width="1"/></svg><div style="position:absolute;left:430.5px;width:600px;text-align:right;top:258.0px;line-height:17px;font-size:12px;color:#4a8af4;font-weight:bold;white-space:nowrap;">用户年龄:</div><div style="position:absolute;left:1048px;top:253px;width:153px;height:28px;border:1px solid #dcdcdc;border-radius:2px;background:#fff"></div><svg style="position:absolute;left:1210px;top:252px" width="13" height="13" viewBox="0 0 13 13"><circle cx="6.5" cy="6.5" r="5.6" fill="none" stroke="#f00" stroke-width="1.15"/><line x1="2.2" y1="6.5" x2="10.8" y2="6.5" stroke="#f00" stroke-width="1"/></svg><svg style="position:absolute;left:1520px;top:260px" width="13" height="13" viewBox="0 0 13 13"><circle cx="6.5" cy="6.5" r="5.6" fill="none" stroke="#4a8af4" stroke-width="1.15"/><line x1="2.2" y1="6.5" x2="10.8" y2="6.5" stroke="#4a8af4" stroke-width="1"/></svg><div style="position:absolute;left:355px;top:291px;width:1181px;height:36px;border:1px dashed #8c8c8c"></div><div style="position:absolute;left:946px;top:292px;width:0px;height:36px;border-left:2px dotted #8c8c8c"></div><div style="position:absolute;left:-161.0px;width:600px;text-align:right;top:300.0px;line-height:17px;font-size:12px;color:#4a8af4;font-weight:bold;white-space:nowrap;">收获地址:</div><div style="position:absolute;left:456px;top:295px;width:153px;height:28px;border:1px solid #dcdcdc;border-radius:2px;background:#fff"></div><div style="position:absolute;left:467px;top:301.5px;line-height:17px;font-size:12px;color:#8a8a8a;font-weight:normal;white-space:nowrap;">请输入信息~</div><svg style="position:absolute;left:618px;top:294px" width="13" height="13" viewBox="0 0 13 13"><circle cx="6.5" cy="6.5" r="5.6" fill="none" stroke="#f00" stroke-width="1.15"/><line x1="2.2" y1="6.5" x2="10.8" y2="6.5" stroke="#f00" stroke-width="1"/></svg><svg style="position:absolute;left:1520px;top:302px" width="13" height="13" viewBox="0 0 13 13"><circle cx="6.5" cy="6.5" r="5.6" fill="none" stroke="#4a8af4" stroke-width="1.15"/><line x1="2.2" y1="6.5" x2="10.8" y2="6.5" stroke="#4a8af4" stroke-width="1"/></svg><div style="position:absolute;left:355px;top:333px;width:1181px;height:36px;border:1px dashed #8c8c8c"></div><div style="position:absolute;left:356px;top:350px;width:1122px;height:1px;background:#4a8af4"></div><svg style="position:absolute;left:1482px;top:336px" width="13" height="13" viewBox="0 0 13 13"><circle cx="6.5" cy="6.5" r="5.6" fill="none" stroke="#f00" stroke-width="1.15"/><line x1="2.2" y1="6.5" x2="10.8" y2="6.5" stroke="#f00" stroke-width="1"/></svg><svg style="position:absolute;left:1520px;top:344px" width="13" height="13" viewBox="0 0 13 13"><circle cx="6.5" cy="6.5" r="5.6" fill="none" stroke="#4a8af4" stroke-width="1.15"/><line x1="2.2" y1="6.5" x2="10.8" y2="6.5" stroke="#4a8af4" stroke-width="1"/></svg><div style="position:absolute;left:366px;top:359.5px;line-height:17px;font-size:12px;color:#4a8af4;font-weight:bold;white-space:nowrap;">订单信息:</div><div style="position:absolute;left:355px;top:376px;width:1181px;height:36px;border:1px dashed #8c8c8c"></div><div style="position:absolute;left:946px;top:377px;width:0px;height:36px;border-left:2px dotted #8c8c8c"></div><div style="position:absolute;left:-160.0px;width:600px;text-align:right;top:384.5px;line-height:17px;font-size:12px;color:#4a8af4;font-weight:bold;white-space:nowrap;">下单日期:</div><div style="position:absolute;left:457px;top:380px;width:153px;height:28px;border:1px solid #dcdcdc;border-radius:2px;background:#fff"></div><svg style="position:absolute;left:620px;top:378px" width="13" height="13" viewBox="0 0 13 13"><circle cx="6.5" cy="6.5" r="5.6" fill="none" stroke="#f00" stroke-width="1.15"/><line x1="2.2" y1="6.5" x2="10.8" y2="6.5" stroke="#f00" stroke-width="1"/></svg><div style="position:absolute;left:430.5px;width:600px;text-align:right;top:384.5px;line-height:17px;font-size:12px;color:#4a8af4;font-weight:bold;white-space:nowrap;">商品总价:</div><div style="position:absolute;left:1048px;top:380px;width:153px;height:28px;border:1px solid #dcdcdc;border-radius:2px;background:#fff"></div><svg style="position:absolute;left:1210px;top:378px" width="13" height="13" viewBox="0 0 13 13"><circle cx="6.5" cy="6.5" r="5.6" fill="none" stroke="#f00" stroke-width="1.15"/><line x1="2.2" y1="6.5" x2="10.8" y2="6.5" stroke="#f00" stroke-width="1"/></svg><svg style="position:absolute;left:1520px;top:385px" width="13" height="13" viewBox="0 0 13 13"><circle cx="6.5" cy="6.5" r="5.6" fill="none" stroke="#4a8af4" stroke-width="1.15"/><line x1="2.2" y1="6.5" x2="10.8" y2="6.5" stroke="#4a8af4" stroke-width="1"/></svg><div style="position:absolute;left:355px;top:417px;width:1181px;height:36px;border:1px dashed #8c8c8c"></div><div style="position:absolute;left:946px;top:418px;width:0px;height:36px;border-left:2px dotted #8c8c8c"></div><div style="position:absolute;left:-161.0px;width:600px;text-align:right;top:426.5px;line-height:17px;font-size:12px;color:#4a8af4;font-weight:bold;white-space:nowrap;">支付方式:</div><div style="position:absolute;left:456px;top:421px;width:64px;height:28px;border:1px solid #e6e6e6;border-radius:2px;background:#fff"></div><div style="position:absolute;left:471px;top:427.5px;line-height:17px;font-size:12px;color:#999;font-weight:normal;white-space:nowrap;">请选择</div><svg style="position:absolute;left:508px;top:433px" width="10" height="7" viewBox="0 0 10 7"><path d="M1 1.2 L4.8 5.2 L8.6 1.2" fill="none" stroke="#8a8a8a" stroke-width="2"/></svg><svg style="position:absolute;left:528px;top:420px" width="13" height="13" viewBox="0 0 13 13"><circle cx="6.5" cy="6.5" r="5.6" fill="none" stroke="#f00" stroke-width="1.15"/><line x1="2.2" y1="6.5" x2="10.8" y2="6.5" stroke="#f00" stroke-width="1"/></svg><div style="position:absolute;left:430.5px;width:600px;text-align:right;top:426.5px;line-height:17px;font-size:12px;color:#4a8af4;font-weight:bold;white-space:nowrap;">实际支付:</div><div style="position:absolute;left:1048px;top:421px;width:153px;height:28px;border:1px solid #dcdcdc;border-radius:2px;background:#fff"></div><svg style="position:absolute;left:1210px;top:420px" width="13" height="13" viewBox="0 0 13 13"><circle cx="6.5" cy="6.5" r="5.6" fill="none" stroke="#f00" stroke-width="1.15"/><line x1="2.2" y1="6.5" x2="10.8" y2="6.5" stroke="#f00" stroke-width="1"/></svg><svg style="position:absolute;left:1520px;top:428px" width="13" height="13" viewBox="0 0 13 13"><circle cx="6.5" cy="6.5" r="5.6" fill="none" stroke="#4a8af4" stroke-width="1.15"/><line x1="2.2" y1="6.5" x2="10.8" y2="6.5" stroke="#4a8af4" stroke-width="1"/></svg><div style="position:absolute;left:355px;top:459px;width:1181px;height:36px;border:1px dashed #8c8c8c"></div><div style="position:absolute;left:-161.0px;width:600px;text-align:right;top:468.0px;line-height:17px;font-size:12px;color:#4a8af4;font-weight:bold;white-space:nowrap;">卖家备注:</div><div style="position:absolute;left:456px;top:463px;width:142px;height:28px;border:1px solid #dcdcdc;border-radius:2px;background:#fff"></div><svg style="position:absolute;left:608px;top:462px" width="13" height="13" viewBox="0 0 13 13"><circle cx="6.5" cy="6.5" r="5.6" fill="none" stroke="#f00" stroke-width="1.15"/><line x1="2.2" y1="6.5" x2="10.8" y2="6.5" stroke="#f00" stroke-width="1"/></svg><svg style="position:absolute;left:1520px;top:470px" width="13" height="13" viewBox="0 0 13 13"><circle cx="6.5" cy="6.5" r="5.6" fill="none" stroke="#4a8af4" stroke-width="1.15"/><line x1="2.2" y1="6.5" x2="10.8" y2="6.5" stroke="#4a8af4" stroke-width="1"/></svg><div style="position:absolute;left:355px;top:376px;width:1183px;height:1px;background:#9a9a9a"></div><div style="position:absolute;left:355px;top:417px;width:1183px;height:1px;background:#9a9a9a"></div><div style="position:absolute;left:355px;top:376px;width:1181px;height:40px;border:1px dashed #4a8af4"></div><svg style="position:absolute;left:589.5px;top:482px" width="9" height="9" viewBox="0 0 9 9"><path d="M8 2 L2 8 M8 5.5 L5.5 8" stroke="#777" stroke-width="1"/></svg><div style="position:absolute;left:355px;top:501px;width:1181px;height:36px;border:1px dashed #8c8c8c"></div><div style="position:absolute;left:356px;top:518px;width:1122px;height:1px;background:#4a8af4"></div><svg style="position:absolute;left:1482px;top:504px" width="13" height="13" viewBox="0 0 13 13"><circle cx="6.5" cy="6.5" r="5.6" fill="none" stroke="#f00" stroke-width="1.15"/><line x1="2.2" y1="6.5" x2="10.8" y2="6.5" stroke="#f00" stroke-width="1"/></svg><svg style="position:absolute;left:1520px;top:512px" width="13" height="13" viewBox="0 0 13 13"><circle cx="6.5" cy="6.5" r="5.6" fill="none" stroke="#4a8af4" stroke-width="1.15"/><line x1="2.2" y1="6.5" x2="10.8" y2="6.5" stroke="#4a8af4" stroke-width="1"/></svg><div style="position:absolute;left:366px;top:527.5px;line-height:17px;font-size:12px;color:#4a8af4;font-weight:bold;white-space:nowrap;">发票信息:</div><div style="position:absolute;left:355px;top:543px;width:1181px;height:36px;border:1px dashed #8c8c8c"></div><div style="position:absolute;left:748px;top:544px;width:0px;height:36px;border-left:2px dotted #8c8c8c"></div><div style="position:absolute;left:1143px;top:544px;width:0px;height:36px;border-left:2px dotted #8c8c8c"></div><div style="position:absolute;left:-161.0px;width:600px;text-align:right;top:552.0px;line-height:17px;font-size:12px;color:#4a8af4;font-weight:bold;white-space:nowrap;">开票日期:</div><div style="position:absolute;left:456px;top:547px;width:153px;height:28px;border:1px solid #dcdcdc;border-radius:2px;background:#fff"></div><svg style="position:absolute;left:618px;top:546px" width="13" height="13" viewBox="0 0 13 13"><circle cx="6.5" cy="6.5" r="5.6" fill="none" stroke="#f00" stroke-width="1.15"/><line x1="2.2" y1="6.5" x2="10.8" y2="6.5" stroke="#f00" stroke-width="1"/></svg><div style="position:absolute;left:233.0px;width:600px;text-align:right;top:552.0px;line-height:17px;font-size:12px;color:#4a8af4;font-weight:bold;white-space:nowrap;">发票代码:</div><div style="position:absolute;left:850px;top:547px;width:153px;height:28px;border:1px solid #dcdcdc;border-radius:2px;background:#fff"></div><div style="position:absolute;left:861px;top:553.5px;line-height:17px;font-size:12px;color:#8a8a8a;font-weight:normal;white-space:nowrap;">请输入信息~</div><svg style="position:absolute;left:1012px;top:546px" width="13" height="13" viewBox="0 0 13 13"><circle cx="6.5" cy="6.5" r="5.6" fill="none" stroke="#f00" stroke-width="1.15"/><line x1="2.2" y1="6.5" x2="10.8" y2="6.5" stroke="#f00" stroke-width="1"/></svg><div style="position:absolute;left:627.5px;width:600px;text-align:right;top:552.0px;line-height:17px;font-size:12px;color:#4a8af4;font-weight:bold;white-space:nowrap;">开票人:</div><div style="position:absolute;left:1245px;top:547px;width:64px;height:28px;border:1px solid #e6e6e6;border-radius:2px;background:#fff"></div><div style="position:absolute;left:1260px;top:553.5px;line-height:17px;font-size:12px;color:#999;font-weight:normal;white-space:nowrap;">请选择</div><svg style="position:absolute;left:1297px;top:559px" width="10" height="7" viewBox="0 0 10 7"><path d="M1 1.2 L4.8 5.2 L8.6 1.2" fill="none" stroke="#8a8a8a" stroke-width="2"/></svg><svg style="position:absolute;left:1318px;top:546px" width="13" height="13" viewBox="0 0 13 13"><circle cx="6.5" cy="6.5" r="5.6" fill="none" stroke="#f00" stroke-width="1.15"/><line x1="2.2" y1="6.5" x2="10.8" y2="6.5" stroke="#f00" stroke-width="1"/></svg><svg style="position:absolute;left:1520px;top:554px" width="13" height="13" viewBox="0 0 13 13"><circle cx="6.5" cy="6.5" r="5.6" fill="none" stroke="#4a8af4" stroke-width="1.15"/><line x1="2.2" y1="6.5" x2="10.8" y2="6.5" stroke="#4a8af4" stroke-width="1"/></svg><div style="position:absolute;left:355px;top:585px;width:1181px;height:36px;border:1px dashed #8c8c8c"></div><div style="position:absolute;left:748px;top:586px;width:0px;height:36px;border-left:2px dotted #8c8c8c"></div><div style="position:absolute;left:1143px;top:586px;width:0px;height:36px;border-left:2px dotted #8c8c8c"></div><div style="position:absolute;left:-161.0px;width:600px;text-align:right;top:594.0px;line-height:17px;font-size:12px;color:#4a8af4;font-weight:bold;white-space:nowrap;">发票类型:</div><div style="position:absolute;left:456px;top:589px;width:64px;height:28px;border:1px solid #e6e6e6;border-radius:2px;background:#fff"></div><div style="position:absolute;left:471px;top:595.5px;line-height:17px;font-size:12px;color:#999;font-weight:normal;white-space:nowrap;">请选择</div><svg style="position:absolute;left:508px;top:601px" width="10" height="7" viewBox="0 0 10 7"><path d="M1 1.2 L4.8 5.2 L8.6 1.2" fill="none" stroke="#8a8a8a" stroke-width="2"/></svg><svg style="position:absolute;left:528px;top:588px" width="13" height="13" viewBox="0 0 13 13"><circle cx="6.5" cy="6.5" r="5.6" fill="none" stroke="#f00" stroke-width="1.15"/><line x1="2.2" y1="6.5" x2="10.8" y2="6.5" stroke="#f00" stroke-width="1"/></svg><div style="position:absolute;left:236.5px;width:600px;text-align:right;top:594.0px;line-height:17px;font-size:12px;color:#4a8af4;font-weight:bold;white-space:nowrap;">纳税人识别号:</div><div style="position:absolute;left:854px;top:589px;width:153px;height:28px;border:1px solid #dcdcdc;border-radius:2px;background:#fff"></div><div style="position:absolute;left:865px;top:595.5px;line-height:17px;font-size:12px;color:#8a8a8a;font-weight:normal;white-space:nowrap;">请输入信息~</div><svg style="position:absolute;left:1016px;top:588px" width="13" height="13" viewBox="0 0 13 13"><circle cx="6.5" cy="6.5" r="5.6" fill="none" stroke="#f00" stroke-width="1.15"/><line x1="2.2" y1="6.5" x2="10.8" y2="6.5" stroke="#f00" stroke-width="1"/></svg><div style="position:absolute;left:627.5px;width:600px;text-align:right;top:594.0px;line-height:17px;font-size:12px;color:#4a8af4;font-weight:bold;white-space:nowrap;">签名:</div><div style="position:absolute;left:1245px;top:589px;width:153px;height:28px;border:1px solid #dcdcdc;border-radius:2px;background:#fff"></div><div style="position:absolute;left:1256px;top:595.5px;line-height:17px;font-size:12px;color:#777;font-weight:normal;white-space:nowrap;">调用手写板签名</div><svg style="position:absolute;left:1408px;top:588px" width="13" height="13" viewBox="0 0 13 13"><circle cx="6.5" cy="6.5" r="5.6" fill="none" stroke="#f00" stroke-width="1.15"/><line x1="2.2" y1="6.5" x2="10.8" y2="6.5" stroke="#f00" stroke-width="1"/></svg><svg style="position:absolute;left:1520px;top:596px" width="13" height="13" viewBox="0 0 13 13"><circle cx="6.5" cy="6.5" r="5.6" fill="none" stroke="#4a8af4" stroke-width="1.15"/><line x1="2.2" y1="6.5" x2="10.8" y2="6.5" stroke="#4a8af4" stroke-width="1"/></svg><div style="position:absolute;left:357px;top:639px;width:1177px;height:108px;border:1px dashed #4a8af4"></div><div style="position:absolute;left:365px;top:630px;width:157px;height:18px;background:#fff"></div><div style="position:absolute;left:401px;top:630.5px;line-height:20px;font-size:14px;color:#4a8af4;font-weight:bold;white-space:nowrap;">商品明细</div><svg style="position:absolute;left:476px;top:634px" width="13" height="13" viewBox="0 0 13 13"><circle cx="6.5" cy="6.5" r="5.6" fill="none" stroke="#f00" stroke-width="1.15"/><line x1="2.2" y1="6.5" x2="10.8" y2="6.5" stroke="#f00" stroke-width="1"/></svg><div style="position:absolute;left:367px;top:656px;width:1158px;height:40px;background:#f2f2f2;border:1px solid #e2e2e2;box-sizing:border-box"></div><div style="position:absolute;left:657px;top:656px;width:1px;height:40px;background:#e2e2e2"></div><div style="position:absolute;left:947px;top:656px;width:1px;height:40px;background:#e2e2e2"></div><div style="position:absolute;left:1236px;top:656px;width:1px;height:40px;background:#e2e2e2"></div><div style="position:absolute;left:212px;width:600px;text-align:center;top:668.0px;line-height:17px;font-size:12px;color:#666;font-weight:bold;white-space:nowrap;">商品名称</div><div style="position:absolute;left:502px;width:600px;text-align:center;top:668.0px;line-height:17px;font-size:12px;color:#666;font-weight:bold;white-space:nowrap;">商品数量</div><div style="position:absolute;left:791px;width:600px;text-align:center;top:668.0px;line-height:17px;font-size:12px;color:#666;font-weight:bold;white-space:nowrap;">商品金额</div><div style="position:absolute;left:1081px;width:600px;text-align:center;top:668.0px;line-height:17px;font-size:12px;color:#666;font-weight:bold;white-space:nowrap;">商品合计</div><div style="position:absolute;left:367px;top:696px;width:1157px;height:42px;border:1px dashed #8c8c8c"></div><div style="position:absolute;left:656px;top:697px;width:0px;height:42px;border-left:2px dotted #8c8c8c"></div><div style="position:absolute;left:945px;top:697px;width:0px;height:42px;border-left:2px dotted #8c8c8c"></div><div style="position:absolute;left:1234px;top:697px;width:0px;height:42px;border-left:2px dotted #8c8c8c"></div><div style="position:absolute;left:372px;top:705px;width:153px;height:28px;border:1px solid #dcdcdc;border-radius:2px;background:#fff"></div><div style="position:absolute;left:383px;top:711.5px;line-height:17px;font-size:12px;color:#8a8a8a;font-weight:normal;white-space:nowrap;">请输入信息~</div><div style="position:absolute;left:662px;top:705px;width:153px;height:28px;border:1px solid #dcdcdc;border-radius:2px;background:#fff"></div><div style="position:absolute;left:951px;top:705px;width:153px;height:28px;border:1px solid #dcdcdc;border-radius:2px;background:#fff"></div><div style="position:absolute;left:1240px;top:705px;width:153px;height:28px;border:1px solid #dcdcdc;border-radius:2px;background:#fff"></div><div style="position:absolute;left:1540px;top:163px;width:2px;height:720px;background:#dedede"></div><div style="position:absolute;left:1546px;top:175.0px;line-height:17px;font-size:12px;color:#666;font-weight:normal;white-space:nowrap;">字段设置</div><div style="position:absolute;left:1546px;top:198px;width:348px;height:1px;background:#e6e6e6"></div><div style="position:absolute;left:1031px;width:600px;text-align:right;top:212.5px;line-height:17px;font-size:12px;color:#4a8af4;font-weight:bold;white-space:nowrap;">唯一标识</div><div style="position:absolute;left:1641px;top:207px;width:153px;height:30px;border:1px solid #cfcfcf;border-radius:2px;background:#fff;box-sizing:border-box;overflow:hidden"></div><div style="position:absolute;left:1652px;top:207px;width:141px;height:30px;overflow:hidden;line-height:30px;font-size:12.4px;color:#111;white-space:nowrap">date_20251027163332196</div><div style="position:absolute;left:1031px;width:600px;text-align:right;top:250.5px;line-height:17px;font-size:12px;color:#4a8af4;font-weight:bold;white-space:nowrap;">字段标题</div><div style="position:absolute;left:1641px;top:245px;width:155px;height:30px;border:1px solid #cfcfcf;border-radius:2px;background:#fff;box-sizing:border-box;overflow:hidden"></div><div style="position:absolute;left:1652px;top:245px;width:143px;height:30px;overflow:hidden;line-height:30px;font-size:12.4px;color:#111;white-space:nowrap">开票日期</div><div style="position:absolute;left:1031px;width:600px;text-align:right;top:288.5px;line-height:17px;font-size:12px;color:#4a8af4;font-weight:bold;white-space:nowrap;">字段名称</div><div style="position:absolute;left:1641px;top:283px;width:155px;height:30px;border:1px solid #cfcfcf;border-radius:2px;background:#fff;box-sizing:border-box;overflow:hidden"></div><div style="position:absolute;left:1652px;top:283px;width:143px;height:30px;overflow:hidden;line-height:30px;font-size:12.4px;color:#111;white-space:nowrap">kprq</div><div style="position:absolute;left:1031px;width:600px;text-align:right;top:326.5px;line-height:17px;font-size:12px;color:#4a8af4;font-weight:bold;white-space:nowrap;">字段类型</div><div style="position:absolute;left:1641px;top:321px;width:69px;height:30px;border:1px solid #cfcfcf;border-radius:2px;background:#fff;box-sizing:border-box;overflow:hidden"></div><div style="position:absolute;left:1645px;top:321px;height:30px;line-height:30px;font-size:12.4px;color:#111;white-space:nowrap">date</div><svg style="position:absolute;left:1696px;top:332px" width="10" height="8" viewBox="0 0 10 8"><path d="M1.2 1.5 L5 5.5 L8.8 1.5" fill="none" stroke="#111" stroke-width="2"/></svg><div style="position:absolute;left:1031px;width:600px;text-align:right;top:364.5px;line-height:17px;font-size:12px;color:#4a8af4;font-weight:bold;white-space:nowrap;">字段长度</div><div style="position:absolute;left:1641px;top:359px;width:80px;height:30px;border:1px solid #cfcfcf;border-radius:2px;background:#fff;box-sizing:border-box;overflow:hidden"></div><div style="position:absolute;left:1652px;top:359px;width:68px;height:30px;overflow:hidden;line-height:30px;font-size:12.4px;color:#111;white-space:nowrap">0</div><div style="position:absolute;left:1031px;width:600px;text-align:right;top:402.5px;line-height:17px;font-size:12px;color:#4a8af4;font-weight:bold;white-space:nowrap;">组件宽度</div><div style="position:absolute;left:1641px;top:397px;width:80px;height:30px;border:1px solid #cfcfcf;border-radius:2px;background:#fff;box-sizing:border-box;overflow:hidden"></div><div style="position:absolute;left:1652px;top:397px;width:68px;height:30px;overflow:hidden;line-height:30px;font-size:12.4px;color:#111;white-space:nowrap">120</div><div style="position:absolute;left:1031px;width:600px;text-align:right;top:440.5px;line-height:17px;font-size:12px;color:#4a8af4;font-weight:bold;white-space:nowrap;">日期格式</div><div style="position:absolute;left:1641px;top:435px;width:147px;height:30px;border:1px solid #cfcfcf;border-radius:2px;background:#fff;box-sizing:border-box;overflow:hidden"></div><div style="position:absolute;left:1645px;top:435px;height:30px;line-height:30px;font-size:12.4px;color:#111;white-space:nowrap">yyyy-MM-dd HH:mm:ss</div><svg style="position:absolute;left:1774px;top:446px" width="10" height="8" viewBox="0 0 10 8"><path d="M1.2 1.5 L5 5.5 L8.8 1.5" fill="none" stroke="#111" stroke-width="2"/></svg><div style="position:absolute;left:1031px;width:600px;text-align:right;top:478.5px;line-height:17px;font-size:12px;color:#4a8af4;font-weight:bold;white-space:nowrap;">字段只读</div><div style="position:absolute;left:1641px;top:473px;width:34px;height:30px;border:1px solid #cfcfcf;border-radius:2px;background:#fff;box-sizing:border-box;overflow:hidden"></div><div style="position:absolute;left:1645px;top:473px;height:30px;line-height:30px;font-size:12.4px;color:#111;white-space:nowrap">否</div><svg style="position:absolute;left:1661px;top:484px" width="10" height="8" viewBox="0 0 10 8"><path d="M1.2 1.5 L5 5.5 L8.8 1.5" fill="none" stroke="#111" stroke-width="2"/></svg><div style="position:absolute;left:1031px;width:600px;text-align:right;top:516.5px;line-height:17px;font-size:12px;color:#4a8af4;font-weight:bold;white-space:nowrap;">字段必填</div><div style="position:absolute;left:1641px;top:511px;width:34px;height:30px;border:1px solid #cfcfcf;border-radius:2px;background:#fff;box-sizing:border-box;overflow:hidden"></div><div style="position:absolute;left:1645px;top:511px;height:30px;line-height:30px;font-size:12.4px;color:#111;white-space:nowrap">否</div><svg style="position:absolute;left:1661px;top:522px" width="10" height="8" viewBox="0 0 10 8"><path d="M1.2 1.5 L5 5.5 L8.8 1.5" fill="none" stroke="#111" stroke-width="2"/></svg><div style="position:absolute;left:1031px;width:600px;text-align:right;top:554.5px;line-height:17px;font-size:12px;color:#4a8af4;font-weight:bold;white-space:nowrap;">字段记忆</div><div style="position:absolute;left:1641px;top:549px;width:34px;height:30px;border:1px solid #cfcfcf;border-radius:2px;background:#fff;box-sizing:border-box;overflow:hidden"></div><div style="position:absolute;left:1645px;top:549px;height:30px;line-height:30px;font-size:12.4px;color:#111;white-space:nowrap">否</div><svg style="position:absolute;left:1661px;top:560px" width="10" height="8" viewBox="0 0 10 8"><path d="M1.2 1.5 L5 5.5 L8.8 1.5" fill="none" stroke="#111" stroke-width="2"/></svg><div style="position:absolute;left:1031px;width:600px;text-align:right;top:592.5px;line-height:17px;font-size:12px;color:#4a8af4;font-weight:bold;white-space:nowrap;">内容唯一</div><div style="position:absolute;left:1641px;top:587px;width:34px;height:30px;border:1px solid #cfcfcf;border-radius:2px;background:#fff;box-sizing:border-box;overflow:hidden"></div><div style="position:absolute;left:1645px;top:587px;height:30px;line-height:30px;font-size:12.4px;color:#111;white-space:nowrap">否</div><svg style="position:absolute;left:1661px;top:598px" width="10" height="8" viewBox="0 0 10 8"><path d="M1.2 1.5 L5 5.5 L8.8 1.5" fill="none" stroke="#111" stroke-width="2"/></svg><div style="position:absolute;left:1031px;width:600px;text-align:right;top:630.5px;line-height:17px;font-size:12px;color:#4a8af4;font-weight:bold;white-space:nowrap;"><span style="font-size:13.8px">lable</span>隐藏</div><div style="position:absolute;left:1641px;top:625px;width:34px;height:30px;border:1px solid #cfcfcf;border-radius:2px;background:#fff;box-sizing:border-box;overflow:hidden"></div><div style="position:absolute;left:1645px;top:625px;height:30px;line-height:30px;font-size:12.4px;color:#111;white-space:nowrap">否</div><svg style="position:absolute;left:1661px;top:636px" width="10" height="8" viewBox="0 0 10 8"><path d="M1.2 1.5 L5 5.5 L8.8 1.5" fill="none" stroke="#111" stroke-width="2"/></svg><div style="position:absolute;left:1031px;width:600px;text-align:right;top:668.5px;line-height:17px;font-size:12px;color:#4a8af4;font-weight:bold;white-space:nowrap;">帮助信息</div><div style="position:absolute;left:1641px;top:663px;width:155px;height:30px;border:1px solid #cfcfcf;border-radius:2px;background:#fff;box-sizing:border-box;overflow:hidden"></div><div style="position:absolute;left:1031px;width:600px;text-align:right;top:706.5px;line-height:17px;font-size:12px;color:#4a8af4;font-weight:bold;white-space:nowrap;">默认内容</div><div style="position:absolute;left:1641px;top:701px;width:157px;height:30px;border:1px solid #cfcfcf;border-radius:2px;background:#fff;box-sizing:border-box;overflow:hidden"></div><div style="position:absolute;left:1031px;width:600px;text-align:right;top:744.5px;line-height:17px;font-size:12px;color:#4a8af4;font-weight:bold;white-space:nowrap;">规则引擎</div><div style="position:absolute;left:1641px;top:739px;width:157px;height:30px;border:1px solid #cfcfcf;border-radius:2px;background:#fff;box-sizing:border-box;overflow:hidden"></div><div style="position:absolute;left:1800px;top:208.0px;line-height:21px;font-size:15px;color:#f00;font-weight:normal;white-space:nowrap;">S</div><div style="position:absolute;left:1804px;top:705.0px;line-height:20px;font-size:14px;color:#f00;font-weight:normal;white-space:nowrap;">配</div><div style="position:absolute;left:1804px;top:743.0px;line-height:20px;font-size:14px;color:#f00;font-weight:normal;white-space:nowrap;">配</div><div style="position:absolute;left:1560px;top:775px;width:48px;height:26px;background:#4a8af4;border-radius:3px"></div><div style="position:absolute;left:1284px;width:600px;text-align:center;top:779.5px;line-height:17px;font-size:12px;color:#fff;font-weight:bold;white-space:nowrap;">保存</div><div style="position:absolute;left:5px;top:883px;width:1895px;height:28px;background:#fff"></div><div style="position:absolute;left:660px;width:600px;text-align:center;top:886.0px;line-height:20px;font-size:14px;color:#333;font-weight:normal;white-space:nowrap;">Gadmin V9.0 [当前系统版本：9.0.6]</div><div style="position:absolute;left:1851px;top:891.0px;line-height:24px;font-size:17px;color:#1a8fc6;font-weight:normal;white-space:nowrap;font-style:italic">cojz8.com</div><div style="position:absolute;left:42px;top:54px;font-size:16.3px;line-height:16px;color:rgba(170,170,170,0.17);white-space:nowrap;transform-origin:0 14px;transform:rotate(-20deg);pointer-events:none">Id:12026-01-08gadmin</div><div style="position:absolute;left:374px;top:54px;font-size:16.3px;line-height:16px;color:rgba(170,170,170,0.17);white-space:nowrap;transform-origin:0 14px;transform:rotate(-20deg);pointer-events:none">Id:12026-01-08gadmin</div><div style="position:absolute;left:705px;top:54px;font-size:16.3px;line-height:16px;color:rgba(170,170,170,0.17);white-space:nowrap;transform-origin:0 14px;transform:rotate(-20deg);pointer-events:none">Id:12026-01-08gadmin</div><div style="position:absolute;left:1037px;top:54px;font-size:16.3px;line-height:16px;color:rgba(170,170,170,0.17);white-space:nowrap;transform-origin:0 14px;transform:rotate(-20deg);pointer-events:none">Id:12026-01-08gadmin</div><div style="position:absolute;left:1369px;top:54px;font-size:16.3px;line-height:16px;color:rgba(170,170,170,0.17);white-space:nowrap;transform-origin:0 14px;transform:rotate(-20deg);pointer-events:none">Id:12026-01-08gadmin</div><div style="position:absolute;left:1701px;top:54px;font-size:16.3px;line-height:16px;color:rgba(170,170,170,0.17);white-space:nowrap;transform-origin:0 14px;transform:rotate(-20deg);pointer-events:none">Id:12026-01-08gadmin</div><div style="position:absolute;left:42px;top:184px;font-size:16.3px;line-height:16px;color:rgba(170,170,170,0.17);white-space:nowrap;transform-origin:0 14px;transform:rotate(-20deg);pointer-events:none">Id:12026-01-08gadmin</div><div style="position:absolute;left:374px;top:184px;font-size:16.3px;line-height:16px;color:rgba(170,170,170,0.17);white-space:nowrap;transform-origin:0 14px;transform:rotate(-20deg);pointer-events:none">Id:12026-01-08gadmin</div><div style="position:absolute;left:705px;top:184px;font-size:16.3px;line-height:16px;color:rgba(170,170,170,0.17);white-space:nowrap;transform-origin:0 14px;transform:rotate(-20deg);pointer-events:none">Id:12026-01-08gadmin</div><div style="position:absolute;left:1037px;top:184px;font-size:16.3px;line-height:16px;color:rgba(170,170,170,0.17);white-space:nowrap;transform-origin:0 14px;transform:rotate(-20deg);pointer-events:none">Id:12026-01-08gadmin</div><div style="position:absolute;left:1369px;top:184px;font-size:16.3px;line-height:16px;color:rgba(170,170,170,0.17);white-space:nowrap;transform-origin:0 14px;transform:rotate(-20deg);pointer-events:none">Id:12026-01-08gadmin</div><div style="position:absolute;left:1701px;top:184px;font-size:16.3px;line-height:16px;color:rgba(170,170,170,0.17);white-space:nowrap;transform-origin:0 14px;transform:rotate(-20deg);pointer-events:none">Id:12026-01-08gadmin</div><div style="position:absolute;left:42px;top:314px;font-size:16.3px;line-height:16px;color:rgba(170,170,170,0.17);white-space:nowrap;transform-origin:0 14px;transform:rotate(-20deg);pointer-events:none">Id:12026-01-08gadmin</div><div style="position:absolute;left:374px;top:314px;font-size:16.3px;line-height:16px;color:rgba(170,170,170,0.17);white-space:nowrap;transform-origin:0 14px;transform:rotate(-20deg);pointer-events:none">Id:12026-01-08gadmin</div><div style="position:absolute;left:705px;top:314px;font-size:16.3px;line-height:16px;color:rgba(170,170,170,0.17);white-space:nowrap;transform-origin:0 14px;transform:rotate(-20deg);pointer-events:none">Id:12026-01-08gadmin</div><div style="position:absolute;left:1037px;top:314px;font-size:16.3px;line-height:16px;color:rgba(170,170,170,0.17);white-space:nowrap;transform-origin:0 14px;transform:rotate(-20deg);pointer-events:none">Id:12026-01-08gadmin</div><div style="position:absolute;left:1369px;top:314px;font-size:16.3px;line-height:16px;color:rgba(170,170,170,0.17);white-space:nowrap;transform-origin:0 14px;transform:rotate(-20deg);pointer-events:none">Id:12026-01-08gadmin</div><div style="position:absolute;left:1701px;top:314px;font-size:16.3px;line-height:16px;color:rgba(170,170,170,0.17);white-space:nowrap;transform-origin:0 14px;transform:rotate(-20deg);pointer-events:none">Id:12026-01-08gadmin</div><div style="position:absolute;left:42px;top:444px;font-size:16.3px;line-height:16px;color:rgba(170,170,170,0.17);white-space:nowrap;transform-origin:0 14px;transform:rotate(-20deg);pointer-events:none">Id:12026-01-08gadmin</div><div style="position:absolute;left:374px;top:444px;font-size:16.3px;line-height:16px;color:rgba(170,170,170,0.17);white-space:nowrap;transform-origin:0 14px;transform:rotate(-20deg);pointer-events:none">Id:12026-01-08gadmin</div><div style="position:absolute;left:705px;top:444px;font-size:16.3px;line-height:16px;color:rgba(170,170,170,0.17);white-space:nowrap;transform-origin:0 14px;transform:rotate(-20deg);pointer-events:none">Id:12026-01-08gadmin</div><div style="position:absolute;left:1037px;top:444px;font-size:16.3px;line-height:16px;color:rgba(170,170,170,0.17);white-space:nowrap;transform-origin:0 14px;transform:rotate(-20deg);pointer-events:none">Id:12026-01-08gadmin</div><div style="position:absolute;left:1369px;top:444px;font-size:16.3px;line-height:16px;color:rgba(170,170,170,0.17);white-space:nowrap;transform-origin:0 14px;transform:rotate(-20deg);pointer-events:none">Id:12026-01-08gadmin</div><div style="position:absolute;left:1701px;top:444px;font-size:16.3px;line-height:16px;color:rgba(170,170,170,0.17);white-space:nowrap;transform-origin:0 14px;transform:rotate(-20deg);pointer-events:none">Id:12026-01-08gadmin</div><div style="position:absolute;left:42px;top:574px;font-size:16.3px;line-height:16px;color:rgba(170,170,170,0.17);white-space:nowrap;transform-origin:0 14px;transform:rotate(-20deg);pointer-events:none">Id:12026-01-08gadmin</div><div style="position:absolute;left:374px;top:574px;font-size:16.3px;line-height:16px;color:rgba(170,170,170,0.17);white-space:nowrap;transform-origin:0 14px;transform:rotate(-20deg);pointer-events:none">Id:12026-01-08gadmin</div><div style="position:absolute;left:705px;top:574px;font-size:16.3px;line-height:16px;color:rgba(170,170,170,0.17);white-space:nowrap;transform-origin:0 14px;transform:rotate(-20deg);pointer-events:none">Id:12026-01-08gadmin</div><div style="position:absolute;left:1037px;top:574px;font-size:16.3px;line-height:16px;color:rgba(170,170,170,0.17);white-space:nowrap;transform-origin:0 14px;transform:rotate(-20deg);pointer-events:none">Id:12026-01-08gadmin</div><div style="position:absolute;left:1369px;top:574px;font-size:16.3px;line-height:16px;color:rgba(170,170,170,0.17);white-space:nowrap;transform-origin:0 14px;transform:rotate(-20deg);pointer-events:none">Id:12026-01-08gadmin</div><div style="position:absolute;left:1701px;top:574px;font-size:16.3px;line-height:16px;color:rgba(170,170,170,0.17);white-space:nowrap;transform-origin:0 14px;transform:rotate(-20deg);pointer-events:none">Id:12026-01-08gadmin</div>
</body></html>
